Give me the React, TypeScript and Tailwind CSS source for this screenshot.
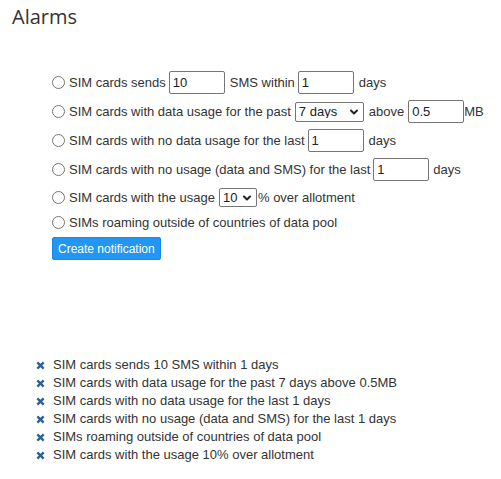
import React from "react";
import { ChevronDown } from "lucide-react";

const inputCls =
  "h-[23px] w-[56px] border border-[#767676] rounded-[2px] px-[3px] text-[13px] text-[#222] bg-white outline-none";

function Radio() {
  return (
    <input
      type="radio"
      name="alarm"
      className="m-0 mr-[4px] h-[13px] w-[13px] shrink-0"
    />
  );
}

function Select({ value, width, height }: { value: string; width: string; height: string }) {
  return (
    <div className={`relative ${width} ${height} shrink-0`}>
      <select
        defaultValue={value}
        className="appearance-none w-full h-full border border-[#767676] rounded-[2px] pl-[3px] text-[13px] leading-none text-[#222] bg-white"
      >
        <option>{value}</option>
      </select>
      <ChevronDown
        className="absolute right-[4px] top-1/2 -translate-y-1/2 w-[12px] h-[12px] pointer-events-none text-[#222]"
        strokeWidth={4}
      />
    </div>
  );
}

function Times() {
  return (
    <svg viewBox="0 0 10 10" className="w-[9px] h-[9px] mr-[8px] shrink-0">
      <path d="M1.5 1.5 L8.5 8.5 M8.5 1.5 L1.5 8.5" stroke="#2e5f98" strokeWidth="2.6" strokeLinecap="butt" />
    </svg>
  );
}

const created = [
  "SIM cards sends 10 SMS within 1 days",
  "SIM cards with data usage for the past 7 days above 0.5MB",
  "SIM cards with no data usage for the last 1 days",
  "SIM cards with no usage (data and SMS) for the last 1 days",
  "SIMs roaming outside of countries of data pool",
  "SIM cards with the usage 10% over allotment",
];

export default function App() {
  return (
    <div className="w-[501px] h-[479px] bg-white px-[12px] pt-[5px] text-[#333] font-['Liberation_Sans',Arial,sans-serif] text-[13px]">
      <h1 className="font-['Open_Sans',sans-serif] text-[20px] leading-[24px] font-normal text-[#333]">
        Alarms
      </h1>

      {/* Alarm options */}
      <div className="ml-[40px] mt-[39px] flex flex-col">
        <div className="h-[29px] flex items-center">
          <Radio />
          <span>SIM cards sends</span>
          <input className={`${inputCls} ml-[3px] mr-[5px]`} defaultValue="10" />
          <span>SMS within</span>
          <input className={`${inputCls} ml-[3px] mr-[5px]`} defaultValue="1" />
          <span>days</span>
        </div>
        <div className="h-[29px] flex items-center">
          <Radio />
          <span>SIM cards with data usage for the past</span>
          <div className="ml-[4px] mr-[5px]">
            <Select value="7 days" width="w-[69px]" height="h-[20px]" />
          </div>
          <span>above</span>
          <input className={`${inputCls} ml-[4px]`} defaultValue="0.5" />
          <span>MB</span>
        </div>
        <div className="h-[29px] flex items-center">
          <Radio />
          <span>SIM cards with no data usage for the last</span>
          <input className={`${inputCls} ml-[3px] mr-[5px]`} defaultValue="1" />
          <span>days</span>
        </div>
        <div className="h-[29px] flex items-center">
          <Radio />
          <span>SIM cards with no usage (data and SMS) for the last</span>
          <input className={`${inputCls} ml-[3px] mr-[4px]`} defaultValue="1" />
          <span>days</span>
        </div>
        <div className="h-[27px] flex items-center">
          <Radio />
          <span>SIM cards with the usage</span>
          <div className="ml-[4px] mr-[1px]">
            <Select value="10" width="w-[38px]" height="h-[19px]" />
          </div>
          <span>% over allotment</span>
        </div>
        <div className="h-[23px] flex items-center">
          <Radio />
          <span>SIMs roaming outside of countries of data pool</span>
        </div>
        <div className="mt-[3px]">
          <button className="h-[23px] px-[5px] bg-[#2196f3] border border-[#1e88e5] rounded-[2px] text-white text-[12px] leading-none">
            Create notification
          </button>
        </div>
      </div>

      {/* Created notifications */}
      <ul className="mt-[96px] ml-[24px] flex flex-col">
        {created.map((t) => (
          <li key={t} className="h-[18px] flex items-center">
            <Times />
            <span>{t}</span>
          </li>
        ))}
      </ul>
    </div>
  );
}
